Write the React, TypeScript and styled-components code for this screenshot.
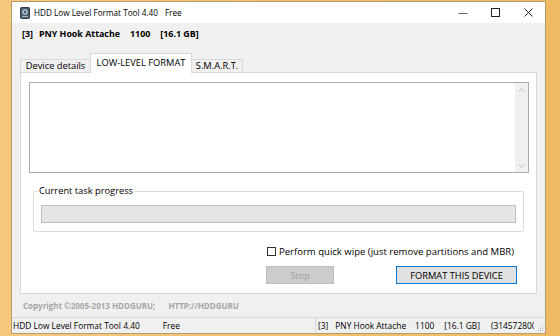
import React from "react";
import styled, { createGlobalStyle } from "styled-components";

const Global = createGlobalStyle`
  html, body { margin: 0; padding: 0; }
  body {
    width: 560px;
    height: 336px;
    overflow: hidden;
    background: linear-gradient(90deg, #f6c87d 0%, #f3c16e 50%, #f0ba62 100%);
    font-family: "Open Sans", "Noto Sans", sans-serif;
    color: #000;
  }
`;

const Win = styled.div`
  margin: 1px 0 0 11px;
  width: 535px;
  height: 333px;
  box-sizing: border-box;
  border: 1px solid #b59b72;
  display: flex;
  flex-direction: column;
  background: #f0f0f0;
`;

const TitleBar = styled.div`
  height: 21px;
  flex: none;
  background: #fff;
  display: flex;
  align-items: center;
`;

const AppIcon = styled.svg`
  margin-left: 8px;
  flex: none;
`;

const TitleText = styled.span`
  margin-left: 4px;
  font-size: 8.2px;
  white-space: pre;
  display: flex;
  gap: 7px;
`;

const Controls = styled.div`
  margin-left: auto;
  display: flex;
  height: 21px;
`;

const CtrlBtn = styled.div`
  width: 33px;
  height: 21px;
  display: flex;
  align-items: center;
  justify-content: center;
`;

const Body = styled.div`
  flex: 1;
  display: flex;
  flex-direction: column;
  padding: 0 8px;
  min-height: 0;
`;

const DeviceHeader = styled.div`
  height: 30px;
  box-sizing: border-box;
  padding: 4px 0 0 2px;
  line-height: 14px;
  font-size: 8.9px;
  font-weight: 700;
  display: flex;
  white-space: pre;
`;

const Part = styled.span<{ $gap: number }>`
  margin-left: ${(p) => p.$gap}px;
`;

const Tabs = styled.div`
  height: 20px;
  flex: none;
  display: flex;
  align-items: flex-start;
  margin-bottom: -1px;
  position: relative;
  z-index: 1;
`;

const Tab = styled.div<{ $w: number; $active?: boolean; $first?: boolean }>`
  width: ${(p) => p.$w}px;
  box-sizing: border-box;
  border: 1px solid #d9d9d9;
  border-bottom: none;
  margin-top: ${(p) => (p.$active ? 0 : 6)}px;
  height: ${(p) => (p.$active ? 20 : 13)}px;
  background: ${(p) => (p.$active ? "#fff" : "#f0f0f0")};
  margin-left: ${(p) => (p.$first ? 0 : -1)}px;
  font-size: 9.3px;
  line-height: 12px;
  display: flex;
  align-items: center;
  justify-content: center;
  padding-bottom: ${(p) => (p.$active ? 2 : 1)}px;
  white-space: nowrap;
  position: relative;
  z-index: ${(p) => (p.$active ? 2 : 1)};
`;

const Panel = styled.div`
  height: 222px;
  flex: none;
  box-sizing: border-box;
  border: 1px solid #d9d9d9;
  background: #fff;
  padding: 9px 7px 0 8px;
  display: flex;
  flex-direction: column;
`;

const LogBox = styled.div`
  height: 91px;
  flex: none;
  box-sizing: border-box;
  border: 1px solid #acacac;
  display: flex;
  justify-content: flex-end;
`;

const ScrollBar = styled.div`
  width: 13px;
  background: #f0f0f0;
  display: flex;
  flex-direction: column;
  justify-content: space-between;
  align-items: center;
  padding: 5px 0 4px;
`;

const GroupBox = styled.div`
  margin: 18px 0 0 4px;
  width: 491px;
  height: 41px;
  box-sizing: border-box;
  border: 1px solid #dcdcdc;
  border-radius: 2px;
  position: relative;
  padding: 13px 0 0 7px;
`;

const Legend = styled.span`
  position: absolute;
  top: -7px;
  left: 4px;
  padding: 0 1px;
  background: #fff;
  font-size: 9.3px;
  line-height: 12px;
  color: #000;
`;

const Progress = styled.div`
  width: 475px;
  height: 18px;
  box-sizing: border-box;
  background: #e6e6e6;
  border: 1px solid #bcbcbc;
`;

const Actions = styled.div`
  margin: 14px 0 0 237px;
  display: flex;
  flex-direction: column;
`;

const CheckRow = styled.label`
  display: flex;
  align-items: center;
  height: 10px;
  margin-left: 1px;
  font-size: 9.55px;
  white-space: nowrap;
`;

const CheckBox = styled.span`
  width: 9px;
  height: 9px;
  box-sizing: border-box;
  border: 1px solid #333;
  background: #fff;
  margin-right: 3px;
  flex: none;
`;

const ButtonRow = styled.div`
  margin-top: 10px;
  display: flex;
  gap: 62px;
`;

const Button = styled.div<{ $w: number; $disabled?: boolean }>`
  width: ${(p) => p.$w}px;
  height: 18px;
  box-sizing: border-box;
  border: 1px solid ${(p) => (p.$disabled ? "#bfbfbf" : "#0078d7")};
  background: ${(p) => (p.$disabled ? "#cccccc" : "#e1e1e1")};
  color: ${(p) => (p.$disabled ? "#a0a0a0" : "#000")};
  font-size: 9.3px;
  display: flex;
  align-items: center;
  justify-content: center;
  white-space: nowrap;
`;

const Copyright = styled.div`
  flex: 1;
  display: flex;
  align-items: center;
  padding-left: 3px;
  font-size: 8px;
  font-weight: 700;
  color: #a6a6a6;
  white-space: pre;
`;

const StatusBar = styled.div`
  height: 16px;
  flex: none;
  box-sizing: border-box;
  border-top: 1px solid #d7d7d7;
  display: flex;
  font-size: 8.4px;
  line-height: 15px;
  white-space: pre;
`;

const StatusLeft = styled.div`
  width: 302px;
  padding-left: 1px;
  display: flex;
`;

const StatusRight = styled.div`
  flex: 1;
  min-width: 0;
  overflow: hidden;
  border-left: 1px solid #d7d7d7;
  padding-left: 2px;
  display: flex;
`;

const Grip = styled.svg`
  width: 11px;
  flex: none;
  align-self: flex-end;
`;

const MinIcon = () => (
  <svg width="10" height="10" viewBox="0 0 10 10">
    <line x1="0.5" y1="5.5" x2="9.5" y2="5.5" stroke="#666" strokeWidth="1" />
  </svg>
);
const MaxIcon = () => (
  <svg width="10" height="10" viewBox="0 0 10 10">
    <rect x="0.5" y="0.5" width="8" height="8" fill="none" stroke="#222" strokeWidth="1" />
  </svg>
);
const CloseIcon = () => (
  <svg width="10" height="10" viewBox="0 0 10 10">
    <path d="M0.5 0.5 L8.5 8.5 M8.5 0.5 L0.5 8.5" stroke="#222" strokeWidth="1" />
  </svg>
);

export default function App() {
  return (
    <>
      <Global />
      <Win>
        <TitleBar>
          <AppIcon width="10" height="12" viewBox="0 0 10 12">
            <rect x="0.5" y="0.5" width="9" height="11" rx="1" fill="#4a5a66" stroke="#2c3a44" />
            <circle cx="5" cy="5" r="3" fill="#9fb4c2" />
            <circle cx="5" cy="5" r="1" fill="#2c3a44" />
            <rect x="2" y="9" width="6" height="1.2" fill="#9fb4c2" />
          </AppIcon>
          <TitleText>
            <span>HDD Low Level Format Tool 4.40</span>
            <span>Free</span>
          </TitleText>
          <Controls>
            <CtrlBtn><MinIcon /></CtrlBtn>
            <CtrlBtn><MaxIcon /></CtrlBtn>
            <CtrlBtn><CloseIcon /></CtrlBtn>
          </Controls>
        </TitleBar>
        <Body>
          <DeviceHeader>
            <span>[3]</span>
            <Part $gap={6}>PNY Hook Attache</Part>
            <Part $gap={10}>1100</Part>
            <Part $gap={10}>[16.1 GB]</Part>
          </DeviceHeader>
          <Tabs>
            <Tab $w={71} $first>Device details</Tab>
            <Tab $w={102} $active>LOW-LEVEL FORMAT</Tab>
            <Tab $w={52}>S.M.A.R.T.</Tab>
          </Tabs>
          <Panel>
            <LogBox>
              <ScrollBar>
                <svg width="7" height="4" viewBox="0 0 7 4">
                  <path d="M0.5 3.5 L3.5 0.8 L6.5 3.5" fill="none" stroke="#c2c2c2" strokeWidth="1" />
                </svg>
                <svg width="7" height="4" viewBox="0 0 7 4">
                  <path d="M0.5 0.5 L3.5 3.2 L6.5 0.5" fill="none" stroke="#c2c2c2" strokeWidth="1" />
                </svg>
              </ScrollBar>
            </LogBox>
            <GroupBox>
              <Legend>Current task progress</Legend>
              <Progress />
            </GroupBox>
            <Actions>
              <CheckRow>
                <CheckBox />
                Perform quick wipe (just remove partitions and MBR)
              </CheckRow>
              <ButtonRow>
                <Button $w={68} $disabled>Stop</Button>
                <Button $w={121}>FORMAT THIS DEVICE</Button>
              </ButtonRow>
            </Actions>
          </Panel>
          <Copyright>
            <span>Copyright ©2005-2013 HDDGURU;</span>
            <Part $gap={13}>HTTP://HDDGURU</Part>
          </Copyright>
        </Body>
        <StatusBar>
          <StatusLeft>
            <span>HDD Low Level Format Tool 4.40</span>
            <Part $gap={23}>Free</Part>
          </StatusLeft>
          <StatusRight>
            <span>[3]</span>
            <Part $gap={7}>PNY Hook Attache</Part>
            <Part $gap={9}>1100</Part>
            <Part $gap={10}>[16.1 GB]</Part>
            <Part $gap={11}>(31457280000 sectors)</Part>
          </StatusRight>
          <Grip height="12" viewBox="0 0 11 12">
            <rect x="8" y="9" width="1" height="1" fill="#b0b0b0" />
            <rect x="6" y="9" width="1" height="1" fill="#b0b0b0" />
            <rect x="8" y="7" width="1" height="1" fill="#b0b0b0" />
            <rect x="4" y="9" width="1" height="1" fill="#b0b0b0" />
            <rect x="6" y="7" width="1" height="1" fill="#b0b0b0" />
            <rect x="8" y="5" width="1" height="1" fill="#b0b0b0" />
          </Grip>
        </StatusBar>
      </Win>
    </>
  );
}
